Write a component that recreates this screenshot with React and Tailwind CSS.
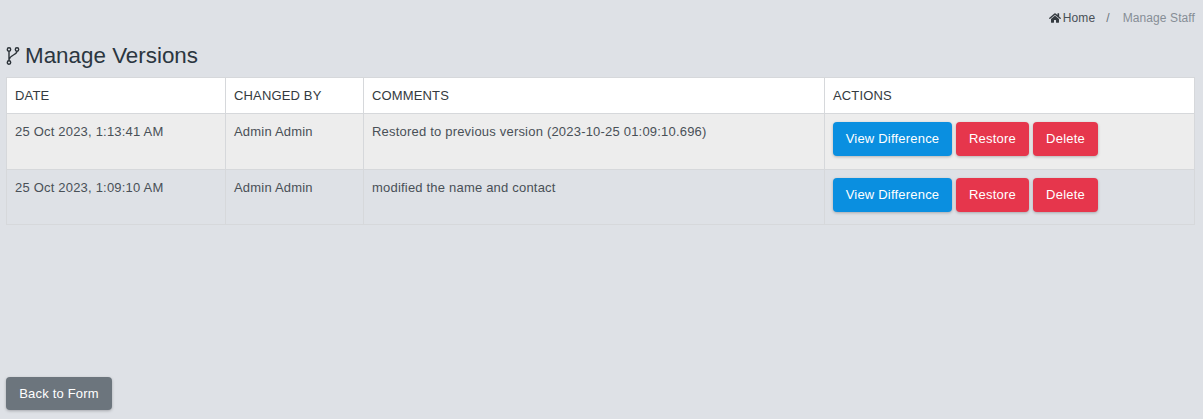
import { FaHome } from 'react-icons/fa'

const rows = [
  { date: '25 Oct 2023, 1:13:41 AM', by: 'Admin Admin', comment: 'Restored to previous version (2023-10-25 01:09:10.696)', bg: 'bg-[#ededed]', h: 'h-[56px]' },
  { date: '25 Oct 2023, 1:09:10 AM', by: 'Admin Admin', comment: 'modified the name and contact', bg: 'bg-[#dee1e6]', h: 'h-[55px]' },
]

const thClass = 'border border-[#d6d8db] px-2 text-left align-middle font-normal text-[13px] tracking-[0.15px] text-[#343a40]'
const tdClass = 'border border-[#d6d8db] px-2 pt-[8px] align-top'
const btnClass = 'rounded-[4px] text-white text-[13px] font-medium tracking-[0.2px] shadow-[0_1px_3px_rgba(0,0,0,0.25)]'

function BranchIcon() {
  return (
    <svg width="14" height="20" viewBox="0 0 14 20" fill="none" stroke="#2b3238" strokeWidth="1.4" className="shrink-0">
      <circle cx="3" cy="3.5" r="1.7" />
      <circle cx="3" cy="16.5" r="1.7" />
      <circle cx="11" cy="3.5" r="1.7" />
      <path d="M3 5.2V14.8M11 5.2C11 9 3.6 9 3.2 13.5" />
    </svg>
  )
}

export default function App() {
  return (
    <div className="h-[419px] bg-[#dee1e6] px-[6px] flex flex-col font-['Liberation_Sans',Arial,sans-serif] text-[#495057]">
      <div className="flex justify-end items-center h-[36px] pr-[2px] text-[12px] tracking-[0.1px]">
        <FaHome className="text-[#343a40] text-[12px] mr-[2px]" />
        <span className="text-[#495057]">Home</span>
        <span className="text-[#6c757d] ml-[11px] mr-[13px]">/</span>
        <span className="text-[#868e96]">Manage Staff</span>
      </div>

      <div className="flex items-center h-[42px] -mt-[1px] gap-[5px]">
        <BranchIcon />
        <h1 className="text-[22.4px] font-normal text-[#2b3640]">Manage Versions</h1>
      </div>

      <table className="w-[1189px] border-collapse table-fixed">
        <thead>
          <tr className="bg-white h-[36px]">
            <th className={`${thClass} w-[219px]`}>DATE</th>
            <th className={`${thClass} w-[138px]`}>CHANGED BY</th>
            <th className={`${thClass} w-[461px]`}>COMMENTS</th>
            <th className={thClass}>ACTIONS</th>
          </tr>
        </thead>
        <tbody>
          {rows.map((r, i) => (
            <tr key={i} className={`${r.bg} ${r.h} text-[13px] tracking-[0.2px]`}>
              <td className={tdClass}>{r.date}</td>
              <td className={tdClass}>{r.by}</td>
              <td className={tdClass}>{r.comment}</td>
              <td className="border border-[#d6d8db] px-2 pt-[8px] align-top">
                <div className="flex gap-[4px]">
                  <button className={`${btnClass} h-[34px] w-[119px] bg-[#0a8fe0]`}>View Difference</button>
                  <button className={`${btnClass} h-[34px] w-[73px] bg-[#e6364c]`}>Restore</button>
                  <button className={`${btnClass} h-[34px] w-[65px] bg-[#e6364c]`}>Delete</button>
                </div>
              </td>
            </tr>
          ))}
        </tbody>
      </table>

      <div className="mt-auto pb-[9px]">
        <button className={`${btnClass} h-[33px] w-[106px] bg-[#6c757d]`}>Back to Form</button>
      </div>
    </div>
  )
}
